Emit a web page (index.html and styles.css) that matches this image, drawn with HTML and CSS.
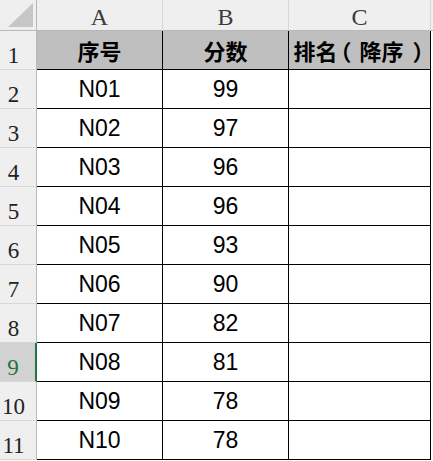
FILE: index.html
```html
<!DOCTYPE html>
<html lang="zh">
<head>
<meta charset="utf-8">
<link rel="stylesheet" href="styles.css">
</head>
<body>
<div class="sheet">
  <div class="corner"><div class="tri"></div></div>
  <div class="colhead">A</div>
  <div class="colhead">B</div>
  <div class="colhead">C</div>
  <div class="colhead extra"></div>

  <div class="rowhead">1</div>
  <div class="cell title">序号</div>
  <div class="cell title">分数</div>
  <div class="cell title">排名<span class="open">（</span>降序<span class="close">）</span></div>
  <div class="cell extra"></div>

  <div class="rowhead">2</div><div class="cell">N01</div><div class="cell">99</div><div class="cell"></div><div class="cell extra"></div>
  <div class="rowhead">3</div><div class="cell">N02</div><div class="cell">97</div><div class="cell"></div><div class="cell extra"></div>
  <div class="rowhead">4</div><div class="cell">N03</div><div class="cell">96</div><div class="cell"></div><div class="cell extra"></div>
  <div class="rowhead">5</div><div class="cell">N04</div><div class="cell">96</div><div class="cell"></div><div class="cell extra"></div>
  <div class="rowhead">6</div><div class="cell">N05</div><div class="cell">93</div><div class="cell"></div><div class="cell extra"></div>
  <div class="rowhead">7</div><div class="cell">N06</div><div class="cell">90</div><div class="cell"></div><div class="cell extra"></div>
  <div class="rowhead">8</div><div class="cell">N07</div><div class="cell">82</div><div class="cell"></div><div class="cell extra"></div>
  <div class="rowhead selected">9</div><div class="cell">N08</div><div class="cell">81</div><div class="cell"></div><div class="cell extra"></div>
  <div class="rowhead">10</div><div class="cell">N09</div><div class="cell">78</div><div class="cell"></div><div class="cell extra"></div>
  <div class="rowhead">11</div><div class="cell">N10</div><div class="cell">78</div><div class="cell"></div><div class="cell extra"></div>
</div>
</body>
</html>
```

FILE: styles.css
```css
html, body {
  margin: 0;
  padding: 0;
  background: #ffffff;
}

.sheet {
  display: grid;
  grid-template-columns: 37px 126px 126px 142px 2px;
  grid-template-rows: 31px repeat(11, 39px);
  width: 433px;
}

.corner {
  box-sizing: border-box;
  background: #efefef;
  border-right: 1px solid #b8b8b8;
  border-bottom: 1px solid #b8b8b8;
  position: relative;
}

.tri {
  position: absolute;
  left: 8px;
  top: 3px;
  width: 25px;
  height: 24px;
  background: #c6c6c6;
  clip-path: polygon(100% 0, 100% 100%, 0 100%);
}

.colhead {
  box-sizing: border-box;
  background: #efefef;
  border-right: 1px solid #d6d6d6;
  border-bottom: 1px solid #b8b8b8;
  display: flex;
  align-items: center;
  justify-content: center;
  font-family: "Liberation Serif", serif;
  font-size: 24px;
  line-height: 1;
  color: #3a3a3a;
  padding-top: 3px;
}

.colhead.extra {
  border-right: none;
}

.rowhead {
  box-sizing: border-box;
  background: #efefef;
  border-right: 1px solid #b8b8b8;
  border-bottom: 1px solid #d6d6d6;
  display: flex;
  align-items: flex-end;
  justify-content: center;
  padding-right: 9px;
  padding-bottom: 2px;
  font-family: "Liberation Serif", serif;
  font-size: 23px;
  line-height: 1;
  color: #222222;
}

.rowhead.selected {
  background: #d2d2d2;
  color: #217346;
  border-right: 2px solid #217346;
}

.cell {
  box-sizing: border-box;
  border-right: 1px solid #000000;
  border-bottom: 1px solid #000000;
  display: flex;
  align-items: center;
  justify-content: center;
  font-family: "Liberation Sans", Arial, sans-serif;
  font-size: 23px;
  line-height: 1;
  color: #000000;
  white-space: nowrap;
}

.cell.title {
  background: #bfbfbf;
  font-family: "Noto Sans CJK SC", sans-serif;
  font-weight: 700;
  font-size: 22px;
}

.open,
.close {
  font-feature-settings: "halt" 1;
}

.open {
  margin-left: 3px;
  margin-right: 8px;
}

.close {
  margin-left: 9px;
  margin-right: 2px;
}

.cell.extra {
  border: none;
  background: #ffffff;
}
```
